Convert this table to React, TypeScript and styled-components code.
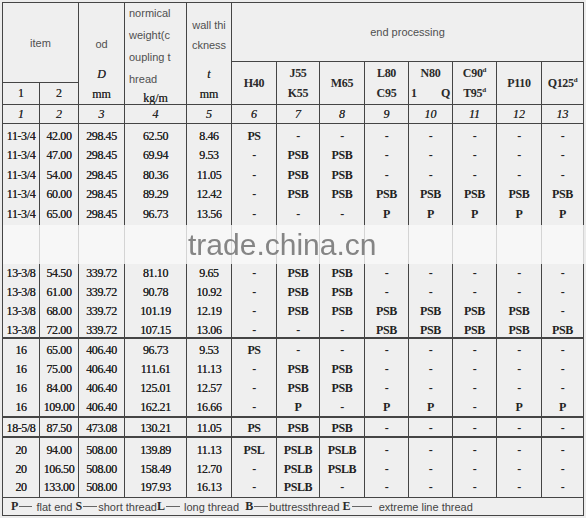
import React from "react";
import styled, { createGlobalStyle } from "styled-components";

const GlobalStyle = createGlobalStyle`
  html, body {
    margin: 0;
    padding: 0;
    background: #ececec;
  }
  body {
    font-family: "Liberation Serif", "Times New Roman", serif;
    color: #2c2c2c;
  }
`;

const LINE = "#454545";

const Sheet = styled.div`
  position: relative;
  margin: 2px 0 0 2px;
  width: max-content;
  display: grid;
  grid-template-columns: 37px 39px 46px 62px 45px 45px 43px 45px 44px 44px 44px 45px 42px;
  grid-template-rows: 59px 21px 22px 19px 101px 39px 75px 79px 20px 60px 18px;
  border-top: 1px solid ${LINE};
  border-left: 1px solid ${LINE};
  background: #efefef;
`;

interface PlaceProps {
  $col?: string;
  $row?: string;
}

const Cell = styled.div<PlaceProps>`
  box-sizing: border-box;
  grid-column: ${({ $col }) => $col || "auto"};
  grid-row: ${({ $row }) => $row || "auto"};
  border-right: 1px solid ${LINE};
  border-bottom: 1px solid ${LINE};
  overflow: hidden;
`;

const HeadCell = styled(Cell)`
  display: flex;
  flex-direction: column;
  align-items: center;
  justify-content: center;
  font-family: "Liberation Sans", Arial, sans-serif;
  font-size: 11px;
  color: #505050;
`;

const StackCell = styled(Cell)`
  display: flex;
  flex-direction: column;
  justify-content: flex-end;
  align-items: center;
  font-family: "Liberation Sans", Arial, sans-serif;
  font-size: 11px;
  color: #505050;
`;

const HeadLabel = styled.div<{ $gap?: number }>`
  line-height: 20px;
  margin-bottom: ${({ $gap }) => $gap || 0}px;
  text-align: center;
`;

const SerifLine = styled.div<{ $italic?: boolean; $h?: number }>`
  font-family: "Liberation Serif", "Times New Roman", serif;
  font-style: ${({ $italic }) => ($italic ? "italic" : "normal")};
  font-size: 12px;
  line-height: ${({ $h }) => $h || 20}px;
  color: #2a2a2a;
  text-shadow: 0 0 0.4px #444;
`;

const WeightCell = styled(Cell)`
  display: flex;
  flex-direction: column;
  font-family: "Liberation Sans", Arial, sans-serif;
  font-size: 11px;
  color: #505050;
`;

const WeightText = styled.div`
  flex: 1;
  padding-left: 4px;
  line-height: 22px;
  margin-top: -1px;
`;

const WeightUnit = styled(SerifLine)`
  text-align: center;
`;

const WallText = styled.div`
  padding-top: 12px;
  line-height: 20px;
  text-align: center;
  flex: 1;
`;

const GradeCell = styled(Cell)`
  display: flex;
  flex-direction: column;
  align-items: center;
  justify-content: center;
  font-weight: bold;
  font-size: 12px;
  line-height: 20px;
  color: #2a2a2a;
  letter-spacing: -0.3px;

  sup {
    font-size: 7px;
    vertical-align: 5px;
    line-height: 0;
  }
`;

const SplitLine = styled.div`
  align-self: stretch;
  display: flex;
  justify-content: space-between;
  padding: 0 2px;
`;

const IndexCell = styled(Cell)`
  display: flex;
  align-items: center;
  justify-content: center;
  font-style: italic;
  font-size: 12px;
  color: #2a2a2a;
  text-shadow: 0 0 0.4px #444;
`;

const PlainCell = styled(Cell)`
  display: flex;
  align-items: center;
  justify-content: center;
  font-size: 12px;
  color: #2a2a2a;
  text-shadow: 0 0 0.4px #444;
`;

interface GroupCellProps {
  $pad: number;
  $line: number;
  $bottom: number;
}

const GroupCell = styled(Cell)<GroupCellProps>`
  padding-top: ${({ $pad }) => $pad}px;
  border-bottom-width: ${({ $bottom }) => $bottom}px;
  border-bottom-style: ${({ $bottom }) => ($bottom ? "solid" : "none")};
  line-height: ${({ $line }) => $line}px;
  font-size: 12px;
  text-align: center;
  letter-spacing: -0.4px;
  color: #222;
`;

const DataLine = styled.div<{ $code: boolean }>`
  font-weight: ${({ $code }) => ($code ? "bold" : "normal")};
  text-shadow: ${({ $code }) => ($code ? "none" : "0 0 0.5px #333")};
  white-space: nowrap;
`;

const BandCell = styled(Cell)`
  background: #f7f7f7;
  border-right-color: #d4d4d4;
  border-bottom: none;
`;

const LegendCell = styled(Cell)`
  grid-column: 1 / 14;
  display: flex;
  align-items: center;
  padding-left: 8px;
  font-family: "Liberation Sans", Arial, sans-serif;
  font-size: 11px;
  color: #444;
  white-space: pre;
`;

const LegendKey = styled.span`
  font-family: "Liberation Serif", "Times New Roman", serif;
  font-weight: bold;
  font-size: 12px;
  color: #2a2a2a;
`;

const Dash = styled.span<{ $n: number }>`
  display: inline-block;
  width: ${({ $n }) => $n}px;
  height: 1px;
  margin: 0 1px;
  background: #666;
  vertical-align: middle;
`;

const Watermark = styled.div`
  position: absolute;
  left: 185px;
  top: 227px;
  font-family: "Liberation Sans", Arial, sans-serif;
  font-size: 30px;
  line-height: 30px;
  color: #858585;
  filter: blur(0.3px);
  pointer-events: none;
`;

type Row = string[];

interface Group {
  rows: Row[];
  pad: number;
  line: number;
  bottom: number;
}

const groups: Group[] = [
  {
    pad: 3,
    line: 19.4,
    bottom: 0,
    rows: [
      ["11-3/4", "42.00", "298.45", "62.50", "8.46", "PS", "-", "-", "-", "-", "-", "-", "-"],
      ["11-3/4", "47.00", "298.45", "69.94", "9.53", "-", "PSB", "PSB", "-", "-", "-", "-", "-"],
      ["11-3/4", "54.00", "298.45", "80.36", "11.05", "-", "PSB", "PSB", "-", "-", "-", "-", "-"],
      ["11-3/4", "60.00", "298.45", "89.29", "12.42", "-", "PSB", "PSB", "PSB", "PSB", "PSB", "PSB", "PSB"],
      ["11-3/4", "65.00", "298.45", "96.73", "13.56", "-", "-", "-", "P", "P", "P", "P", "P"],
    ],
  },
  {
    pad: 0,
    line: 19,
    bottom: 2,
    rows: [
      ["13-3/8", "54.50", "339.72", "81.10", "9.65", "-", "PSB", "PSB", "-", "-", "-", "-", "-"],
      ["13-3/8", "61.00", "339.72", "90.78", "10.92", "-", "PSB", "PSB", "-", "-", "-", "-", "-"],
      ["13-3/8", "68.00", "339.72", "101.19", "12.19", "-", "PSB", "PSB", "PSB", "PSB", "PSB", "PSB", "-"],
      ["13-3/8", "72.00", "339.72", "107.15", "13.06", "-", "-", "-", "PSB", "PSB", "PSB", "PSB", "PSB"],
    ],
  },
  {
    pad: 2,
    line: 19,
    bottom: 2,
    rows: [
      ["16", "65.00", "406.40", "96.73", "9.53", "PS", "-", "-", "-", "-", "-", "-", "-"],
      ["16", "75.00", "406.40", "111.61", "11.13", "-", "PSB", "PSB", "-", "-", "-", "-", "-"],
      ["16", "84.00", "406.40", "125.01", "12.57", "-", "PSB", "PSB", "-", "-", "-", "-", "-"],
      ["16", "109.00", "406.40", "162.21", "16.66", "-", "P", "-", "P", "P", "-", "P", "P"],
    ],
  },
  {
    pad: 1,
    line: 18,
    bottom: 2,
    rows: [["18-5/8", "87.50", "473.08", "130.21", "11.05", "PS", "PSB", "PSB", "-", "-", "-", "-", "-"]],
  },
  {
    pad: 3,
    line: 18.6,
    bottom: 1,
    rows: [
      ["20", "94.00", "508.00", "139.89", "11.13", "PSL", "PSLB", "PSLB", "-", "-", "-", "-", "-"],
      ["20", "106.50", "508.00", "158.49", "12.70", "-", "PSLB", "PSLB", "-", "-", "-", "-", "-"],
      ["20", "133.00", "508.00", "197.93", "16.13", "-", "PSLB", "-", "-", "-", "-", "-", "-"],
    ],
  },
];

const isCode = (v: string) => /[A-Z]/.test(v) || v === "-";

function GroupBlock({ group }: { group: Group }) {
  return (
    <>
      {Array.from({ length: 13 }, (_, c) => (
        <GroupCell key={c} $pad={group.pad} $line={group.line} $bottom={group.bottom}>
          {group.rows.map((r, i) => (
            <DataLine key={i} $code={isCode(r[c])}>
              {r[c]}
            </DataLine>
          ))}
        </GroupCell>
      ))}
    </>
  );
}

export default function App() {
  return (
    <>
      <GlobalStyle />
      <Sheet>
        <HeadCell $col="1 / 3" $row="1 / 3">
          item
        </HeadCell>
        <StackCell $col="3" $row="1 / 4">
          <HeadLabel $gap={10}>od</HeadLabel>
          <SerifLine $italic>D</SerifLine>
          <SerifLine>mm</SerifLine>
        </StackCell>
        <WeightCell $col="4" $row="1 / 4">
          <WeightText>
            normical
            <br />
            weight(c
            <br />
            oupling t
            <br />
            hread
          </WeightText>
          <WeightUnit $h={16}>kg/m</WeightUnit>
        </WeightCell>
        <StackCell $col="5" $row="1 / 4">
          <WallText>
            wall thi
            <br />
            ckness
          </WallText>
          <SerifLine $italic>t</SerifLine>
          <SerifLine>mm</SerifLine>
        </StackCell>
        <HeadCell $col="6 / 14" $row="1">
          end processing
        </HeadCell>

        <GradeCell $col="6" $row="2 / 4">H40</GradeCell>
        <GradeCell $col="7" $row="2 / 4">
          <div>J55</div>
          <div>K55</div>
        </GradeCell>
        <GradeCell $col="8" $row="2 / 4">M65</GradeCell>
        <GradeCell $col="9" $row="2 / 4">
          <div>L80</div>
          <div>C95</div>
        </GradeCell>
        <GradeCell $col="10" $row="2 / 4">
          <div>N80</div>
          <SplitLine>
            <span>1</span>
            <span>Q</span>
          </SplitLine>
        </GradeCell>
        <GradeCell $col="11" $row="2 / 4">
          <div>
            C90<sup>d</sup>
          </div>
          <div>
            T95<sup>d</sup>
          </div>
        </GradeCell>
        <GradeCell $col="12" $row="2 / 4">P110</GradeCell>
        <GradeCell $col="13" $row="2 / 4">
          <div>
            Q125<sup>d</sup>
          </div>
        </GradeCell>

        <PlainCell $col="1" $row="3">1</PlainCell>
        <PlainCell $col="2" $row="3">2</PlainCell>

        {Array.from({ length: 13 }, (_, i) => (
          <IndexCell key={i} $col={String(i + 1)} $row="4">
            {i + 1}
          </IndexCell>
        ))}

        <GroupBlock group={groups[0]} />
        {Array.from({ length: 13 }, (_, i) => (
          <BandCell key={i} />
        ))}
        {groups.slice(1).map((g, i) => (
          <GroupBlock key={i} group={g} />
        ))}

        <LegendCell>
          <LegendKey>P</LegendKey>
          <Dash $n={13} />
          {" flat end "}
          <LegendKey>S</LegendKey>
          <Dash $n={14} />
          {"short thread"}
          <LegendKey>L</LegendKey>
          <Dash $n={14} />
          {" long thread  "}
          <LegendKey>B</LegendKey>
          <Dash $n={14} />
          {"buttressthread "}
          <LegendKey>E</LegendKey>
          <Dash $n={20} />
          {"  extreme line thread"}
        </LegendCell>

        <Watermark>trade.china.cn</Watermark>
      </Sheet>
    </>
  );
}
